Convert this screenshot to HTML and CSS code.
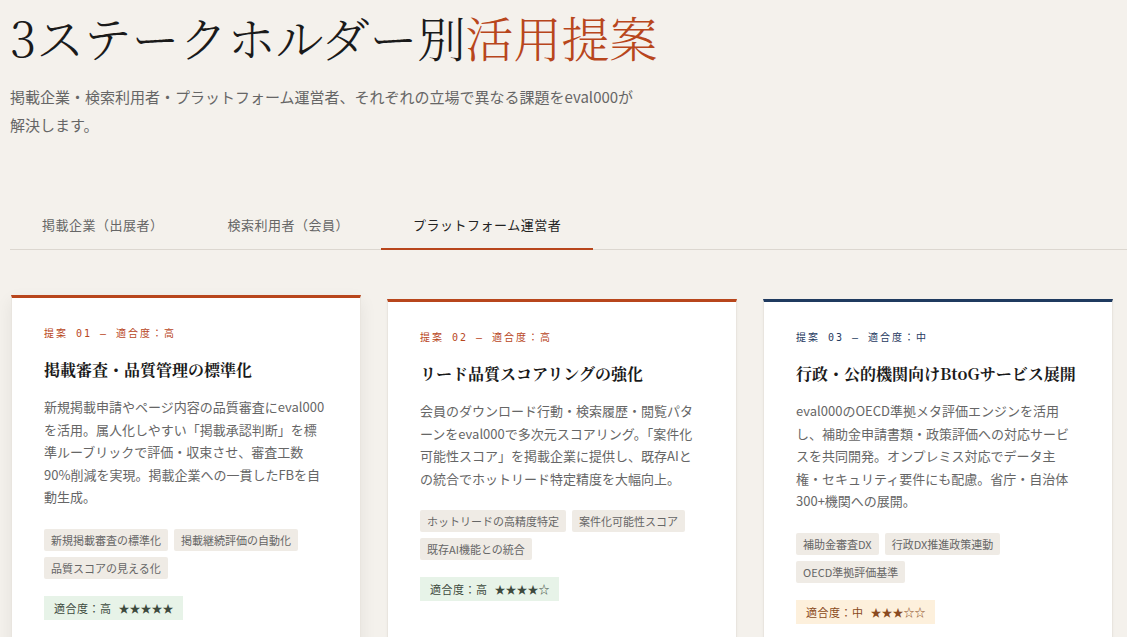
FILE: index.html
```html
<!DOCTYPE html>
<html lang="ja">
<head>
    <meta charset="UTF-8">
    <meta name="viewport" content="width=device-width, initial-scale=1.0">
    <title>3ステークホルダー別活用提案</title>
    <link rel="stylesheet" href="styles.css">
</head>
<body>
    <div class="page">
        <h1 class="page-title">3ステークホルダー別<span class="accent">活用提案</span></h1>
        <p class="lead">掲載企業・検索利用者・プラットフォーム運営者、それぞれの立場で異なる課題をeval000が解決します。</p>

        <!-- Tabs -->
        <div class="tabs">
            <div class="tab">掲載企業（出展者）</div>
            <div class="tab">検索利用者（会員）</div>
            <div class="tab active">プラットフォーム運営者</div>
        </div>

        <!-- Proposal cards -->
        <div class="cards">
            <div class="card raised">
                <div class="card-label">提案 01 — 適合度：高</div>
                <h3 class="card-title">掲載審査・品質管理の標準化</h3>
                <p class="card-text">新規掲載申請やページ内容の品質審査にeval000を活用。属人化しやすい「掲載承認判断」を標準ルーブリックで評価・収束させ、審査工数90%削減を実現。掲載企業への一貫したFBを自動生成。</p>
                <div class="tags">
                    <span class="tag">新規掲載審査の標準化</span>
                    <span class="tag">掲載継続評価の自動化</span>
                    <span class="tag">品質スコアの見える化</span>
                </div>
                <div class="fit high">適合度：高 <span class="stars">★★★★★</span></div>
            </div>

            <div class="card">
                <div class="card-label">提案 02 — 適合度：高</div>
                <h3 class="card-title">リード品質スコアリングの強化</h3>
                <p class="card-text">会員のダウンロード行動・検索履歴・閲覧パターンをeval000で多次元スコアリング。「案件化可能性スコア」を掲載企業に提供し、既存AIとの統合でホットリード特定精度を大幅向上。</p>
                <div class="tags">
                    <span class="tag">ホットリードの高精度特定</span>
                    <span class="tag">案件化可能性スコア</span>
                    <span class="tag">既存AI機能との統合</span>
                </div>
                <div class="fit high">適合度：高 <span class="stars">★★★★☆</span></div>
            </div>

            <div class="card navy">
                <div class="card-label">提案 03 — 適合度：中</div>
                <h3 class="card-title">行政・公的機関向けBtoGサービス展開</h3>
                <p class="card-text">eval000のOECD準拠メタ評価エンジンを活用し、補助金申請書類・政策評価への対応サービスを共同開発。オンプレミス対応でデータ主権・セキュリティ要件にも配慮。省庁・自治体300+機関への展開。</p>
                <div class="tags">
                    <span class="tag">補助金審査DX</span>
                    <span class="tag">行政DX推進政策連動</span>
                    <span class="tag">OECD準拠評価基準</span>
                </div>
                <div class="fit mid">適合度：中 <span class="stars">★★★☆☆</span></div>
            </div>
        </div>
    </div>
</body>
</html>
```

FILE: styles.css
```css
body {
    margin: 0;
    padding: 0;
    background-color: #f4f1ec;
    font-family: "Noto Sans CJK JP", "Noto Sans", sans-serif;
    color: #222;
}

.page {
    padding: 9px 0 0 10px;
}

/* Heading */
.page-title {
    margin: 0;
    font-family: "Noto Serif CJK JP", "Liberation Serif", serif;
    font-weight: 300;
    font-size: 48px;
    line-height: 56px;
    color: #1a1a1a;
}

.accent {
    color: #b8461c;
}

.lead {
    margin: 18px 0 0;
    max-width: 632px;
    font-size: 15px;
    line-height: 28px;
    color: #666;
}

/* Tabs */
.tabs {
    display: flex;
    margin-top: 62px;
    border-bottom: 1px solid #dcd7d0;
}

.tab {
    padding: 14px 32px;
    font-size: 13px;
    line-height: 20px;
    letter-spacing: 0.5px;
    color: #666;
}

.tab.active {
    color: #222;
    border-bottom: 2px solid #b8461c;
    margin-bottom: -1px;
    padding-bottom: 13px;
}

/* Cards */
.cards {
    display: grid;
    grid-template-columns: repeat(3, 350px);
    gap: 26px;
    margin-top: 49px;
    padding-left: 1px;
}

.card {
    background: #ffffff;
    border: 1px solid #e9e5df;
    border-top: 3px solid #b8461c;
    padding: 27px 32px 40px;
    box-shadow: 0 1px 3px rgba(0, 0, 0, 0.04);
}

.card.raised {
    transform: translateY(-4px);
    box-shadow: 0 6px 16px rgba(0, 0, 0, 0.07);
}

.card.navy {
    border-top-color: #1f3a5f;
}

.card-label {
    font-family: "DejaVu Sans Mono", "Noto Sans CJK JP", monospace;
    font-size: 10px;
    line-height: 18px;
    letter-spacing: 2px;
    color: #b8461c;
}

.card.navy .card-label {
    color: #1f3a5f;
}

.card-title {
    margin: 15px 0 0;
    font-family: "Noto Serif CJK JP", "Liberation Serif", serif;
    font-weight: 700;
    font-size: 16px;
    line-height: 24px;
    color: #1a1a1a;
}

.card-text {
    margin: 14px 0 0;
    font-size: 13px;
    line-height: 22.5px;
    color: #666;
}

.tags {
    display: flex;
    flex-wrap: wrap;
    gap: 6px;
    margin-top: 20px;
}

.tag {
    background: #efebe5;
    color: #666;
    font-size: 11px;
    line-height: 14px;
    padding: 4px 7px;
    border-radius: 2px;
}

.fit {
    display: inline-block;
    margin-top: 17px;
    padding: 4px 10px;
    font-size: 11px;
    line-height: 16px;
    letter-spacing: 0.5px;
}

.fit.high {
    background: #e7f3e8;
    color: #3d4a3d;
}

.fit.mid {
    background: #fdf0dc;
    color: #8a4a20;
}

.stars {
    margin-left: 4px;
    letter-spacing: 0;
}
```
